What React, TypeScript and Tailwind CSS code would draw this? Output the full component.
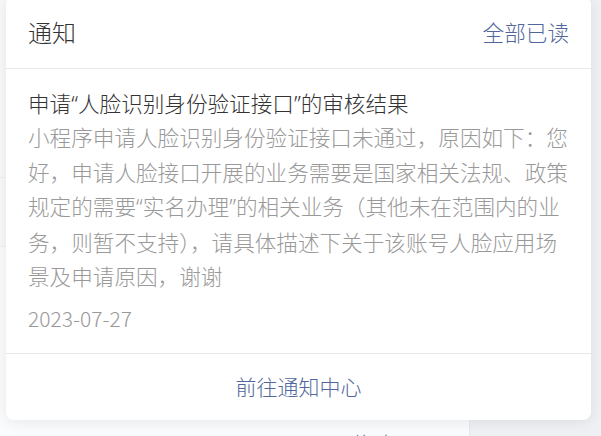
import React from "react";

const font = { fontFamily: '"Noto Sans CJK SC", "Noto Sans", sans-serif' };

function Q({ c }: { c: string }) {
  return <span style={{ fontFamily: '"Noto Sans", sans-serif' }}>{c}</span>;
}

export default function App() {
  return (
    <div
      className="relative w-[601px] h-[436px] overflow-hidden bg-[#eff0f4] font-light"
      style={font}
    >
      {/* page behind */}
      <div className="flex h-full">
        <div className="w-[470px] h-full flex flex-col bg-[#fafbfc] border-r border-[#e6e8ee]">
          <div className="h-[178px] bg-[#f7f8fa] border-b border-[#eef0f3]" />
          <div className="h-[69px] bg-[#f7f8fa] border-b border-[#eef0f3]" />
          <div className="flex-1 flex flex-col justify-end">
            <div className="pl-[352px] h-[8px] overflow-visible text-[21px] leading-[30px] text-[#5a6e9c] whitespace-nowrap">
              修改
            </div>
          </div>
        </div>
        <div className="flex-1 bg-[#eff0f4]" />
      </div>

      {/* popover */}
      <div className="absolute left-[6px] top-[-4px] w-[585px] h-[424px] bg-white rounded-[8px] shadow-[0_2px_14px_rgba(0,0,0,0.08)] flex flex-col">
        <div className="h-[73px] shrink-0 px-[22px] flex items-center justify-between border-b border-[#e8e8ea]">
          <span className="text-[24px] text-[#333333] leading-none">通知</span>
          <span className="text-[21.6px] text-[#51679b] leading-none">全部已读</span>
        </div>
        <div className="px-[22px] pt-[19px] pb-[20px] border-b border-[#e8e8ea]">
          <div className="text-[21.6px] leading-[30px] text-[#333333] whitespace-nowrap">
            申请<Q c="“" />人脸识别身份验证接口<Q c="”" />的审核结果
          </div>
          <div className="mt-[1px] text-[21.6px] leading-[34.5px] text-[#999999] break-all">
            小程序申请人脸识别身份验证接口未通过，原因如下：您好，申请人脸接口开展的业务需要是国家相关法规、政策规定的需要
            <Q c="“" />实名办理<Q c="”" />
            的相关业务（其他未在范围内的业务，则暂不支持），请具体描述下关于该账号人脸应用场景及申请原因，谢谢
          </div>
          <div className="mt-[9px] text-[21px] leading-[30px] text-[#999999]">
            2023-07-27
          </div>
        </div>
        <div className="flex-1 flex items-center justify-center">
          <span className="text-[21px] leading-none text-[#51679b]">前往通知中心</span>
        </div>
      </div>
    </div>
  );
}
